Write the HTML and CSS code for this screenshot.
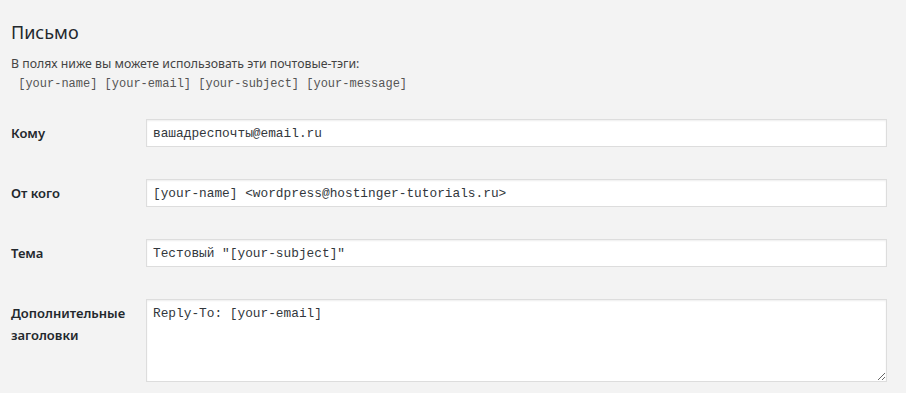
FILE: index.html
```html
<!DOCTYPE html>
<html lang="ru">
<head>
    <meta charset="UTF-8">
    <meta name="viewport" content="width=device-width, initial-scale=1.0">
    <title>Письмо</title>
    <link rel="stylesheet" href="styles.css">
</head>
<body>
    <div class="mail-panel">
        <h2>Письмо</h2>
        <p class="hint">В полях ниже вы можете использовать эти почтовые-тэги:</p>
        <p class="tags">&nbsp;[your-name] [your-email] [your-subject] [your-message]</p>

        <div class="form-table">
            <div class="form-row">
                <label for="mail-to">Кому</label>
                <input type="text" id="mail-to" value="вашадреспочты@email.ru">
            </div>
            <div class="form-row">
                <label for="mail-from">От кого</label>
                <input type="text" id="mail-from" value="[your-name] <wordpress@hostinger-tutorials.ru>">
            </div>
            <div class="form-row">
                <label for="mail-subject">Тема</label>
                <input type="text" id="mail-subject" value='Тестовый "[your-subject]"'>
            </div>
            <div class="form-row">
                <label for="mail-headers">Дополнительные заголовки</label>
                <textarea id="mail-headers">Reply-To: [your-email]</textarea>
            </div>
        </div>
    </div>
</body>
</html>
```

FILE: styles.css
```css
body {
    margin: 0;
    background-color: #f3f3f3;
    font-family: "Noto Sans", "Open Sans", sans-serif;
    color: #23282d;
}

.mail-panel {
    padding: 19px 19px 0 11px;
}

h2 {
    margin: 0;
    font-size: 18px;
    font-weight: 400;
    line-height: 26px;
    color: #23282d;
}

.hint {
    margin: 9px 0 0;
    font-size: 12.3px;
    line-height: 20px;
    color: #444;
}

.tags {
    margin: 0;
    font-family: "Liberation Mono", monospace;
    font-size: 12px;
    line-height: 20px;
    color: #555;
}

.form-table {
    margin-top: 25px;
    display: flex;
    flex-direction: column;
    gap: 32px;
}

.form-row {
    display: grid;
    grid-template-columns: 135px 1fr;
    align-items: start;
}

.form-row label {
    padding-top: 3px;
    width: 125px;
    font-size: 13px;
    font-weight: 600;
    line-height: 22px;
    color: #23282d;
}

input,
textarea {
    box-sizing: border-box;
    margin: 0;
    width: 100%;
    padding: 0 6px;
    border: 1px solid #ddd;
    border-radius: 0;
    background-color: #fff;
    box-shadow: inset 0 1px 2px rgba(0, 0, 0, 0.07);
    font-family: "Liberation Mono", monospace;
    font-size: 12.8px;
    color: #32373c;
    outline: none;
}

input {
    height: 28px;
}

textarea {
    height: 83px;
    padding-top: 5px;
    line-height: 18px;
    resize: both;
}
```
